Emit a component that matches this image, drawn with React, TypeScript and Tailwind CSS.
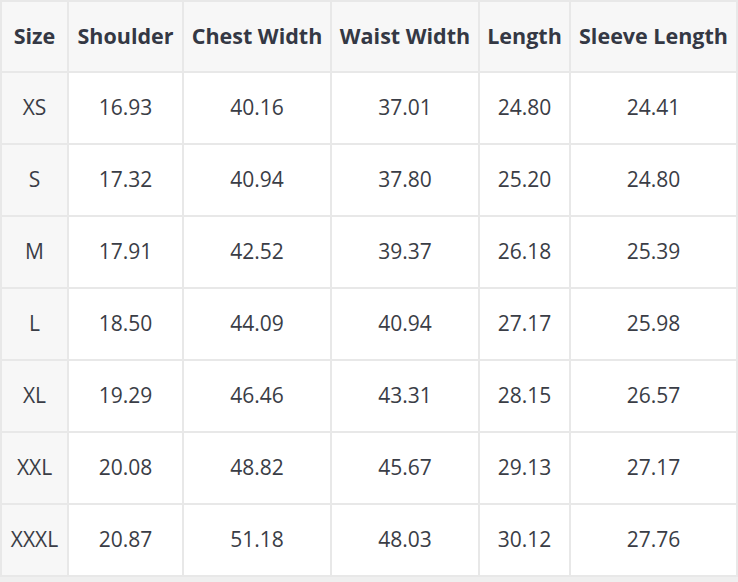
import React from "react";

const headers = ["Size", "Shoulder", "Chest Width", "Waist Width", "Length", "Sleeve Length"];
const rows: string[][] = [
  ["XS", "16.93", "40.16", "37.01", "24.80", "24.41"],
  ["S", "17.32", "40.94", "37.80", "25.20", "24.80"],
  ["M", "17.91", "42.52", "39.37", "26.18", "25.39"],
  ["L", "18.50", "44.09", "40.94", "27.17", "25.98"],
  ["XL", "19.29", "46.46", "43.31", "28.15", "26.57"],
  ["XXL", "20.08", "48.82", "45.67", "29.13", "27.17"],
  ["XXXL", "20.87", "51.18", "48.03", "30.12", "27.76"],
];

export default function App() {
  return (
    <div
      className="w-[738px] h-[582px] bg-[#efefef] overflow-hidden"
      style={{ fontFamily: '"Open Sans", "Noto Sans", sans-serif' }}
    >
      <div className="grid grid-cols-[65px_113px_146px_146px_89px_165px] grid-rows-[69px_repeat(7,70px)] gap-[2px] p-[2px] bg-[#e8e8e8] w-[738px]">
        {headers.map((h) => (
          <div
            key={h}
            className="bg-[#f7f7f7] flex items-center justify-center pb-[1px] text-[21.5px] font-bold text-[#343844] whitespace-nowrap"
          >
            {h}
          </div>
        ))}
        {rows.map((r) =>
          r.map((c, i) => (
            <div
              key={r[0] + i}
              className={`${i === 0 ? "bg-[#f7f7f7]" : "bg-white"} flex items-center justify-center text-[21px] text-[#3a3d46] whitespace-nowrap`}
            >
              {c}
            </div>
          ))
        )}
      </div>
    </div>
  );
}
